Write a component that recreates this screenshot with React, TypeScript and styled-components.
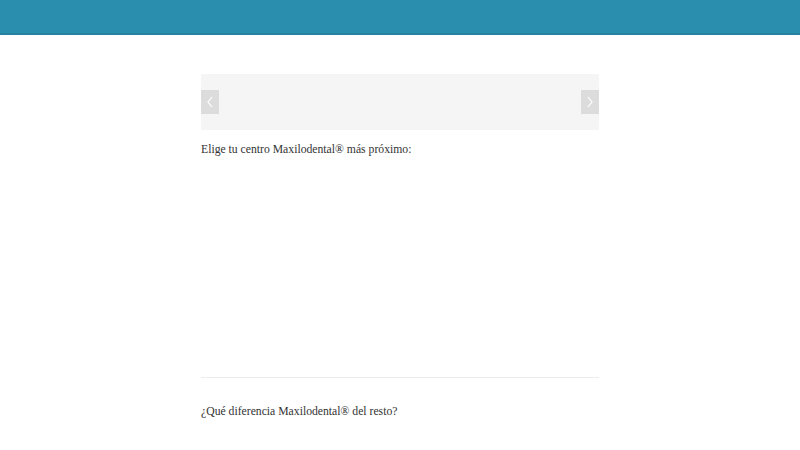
import React from 'react';
import styled, { createGlobalStyle } from 'styled-components';

const GlobalStyle = createGlobalStyle`
  html, body {
    margin: 0;
    padding: 0;
    background: #fff;
    font-family: "Liberation Serif", "Times New Roman", serif;
    color: #333;
  }
`;

const Header = styled.header`
  height: 33px;
  background: #2a8fae;
  border-bottom: 2px solid #2682a0;
`;

const Main = styled.main`
  width: 398px;
  margin: 39px auto 0;
`;

const Slider = styled.div`
  height: 56px;
  background: #f5f5f5;
  display: flex;
  align-items: center;
  justify-content: space-between;
`;

const Arrow = styled.button`
  width: 18px;
  height: 24px;
  padding: 0;
  border: 0;
  background: #dcdcdc;
  display: flex;
  align-items: center;
  justify-content: center;
  cursor: pointer;
`;

const Text = styled.p<{ $top: number }>`
  margin: ${(p) => p.$top}px 0 0;
  font-size: 11.7px;
  line-height: 16px;
`;

const MapArea = styled.div`
  height: 219px;
`;

const Divider = styled.hr`
  margin: 0;
  border: 0;
  border-top: 1px solid #ececec;
`;

const Chevron: React.FC<{ dir: 'left' | 'right' }> = ({ dir }) => (
  <svg width="8" height="12" viewBox="0 0 8 12">
    <path
      d={dir === 'left' ? 'M6 1 L2 6 L6 11' : 'M2 1 L6 6 L2 11'}
      fill="none"
      stroke="#fff"
      strokeWidth="1.2"
    />
  </svg>
);

export default function App() {
  return (
    <>
      <GlobalStyle />
      <Header />
      <Main>
        <Slider>
          <Arrow aria-label="Anterior"><Chevron dir="left" /></Arrow>
          <Arrow aria-label="Siguiente"><Chevron dir="right" /></Arrow>
        </Slider>
        <Text $top={12}>Elige tu centro Maxilodental® más próximo:</Text>
        <MapArea />
        <Divider />
        <Text $top={26}>¿Qué diferencia Maxilodental® del resto?</Text>
      </Main>
    </>
  );
}
